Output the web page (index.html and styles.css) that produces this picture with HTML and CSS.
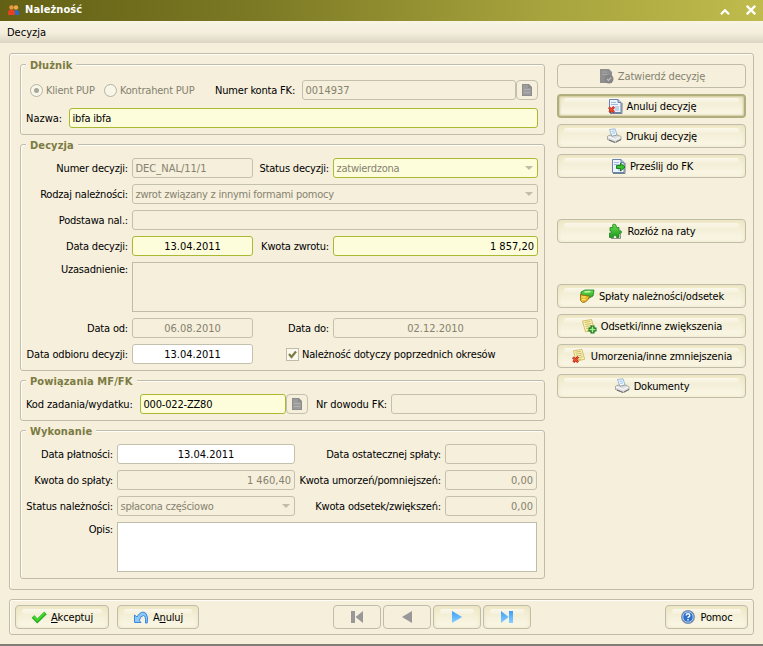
FILE: index.html
```html
<!DOCTYPE html>
<html lang="pl">
<head>
<meta charset="utf-8">
<title>Należność</title>
<link rel="stylesheet" href="styles.css">
</head>
<body>
<svg width="0" height="0" class="defs" aria-hidden="true">
  <defs>
    <linearGradient id="blue" x1="0" y1="0" x2="0" y2="1"><stop offset="0" stop-color="#3f9df8"/><stop offset="1" stop-color="#85d0ff"/></linearGradient>
    <linearGradient id="green" x1="0" y1="0" x2="0" y2="1"><stop offset="0" stop-color="#6be04e"/><stop offset="1" stop-color="#1c9a1c"/></linearGradient>
    <symbol id="page" viewBox="0 0 16 16"><path d="M2.500 1.500H11l3 3v10H2.500z" fill="#eef4fc" stroke="#6a83ad"/><path d="M11 1.500v3h3" fill="#b7c9e5" stroke="#6a83ad"/><path d="M4 4.500h5M4 6.500h7" stroke="#a4b9dc"/><path d="M8 8h4v5H8z" fill="#c3d3ec"/><path d="M3 15.500h12V5" fill="none" stroke="#55607a" stroke-width=".8"/></symbol>
    <symbol id="printer" viewBox="0 0 16 16"><path d="M3.500 1.500l5.500-.7 2 6-5 1.700z" fill="#f4faff" stroke="#7b9cc0" stroke-width=".7"/><path d="M5.500 3.300l3-.3M6.200 5.300l3-.4" stroke="#8fc0ee"/><path d="M1.500 8.300L5 6.800l1 1.500L11 7l4 1.500v3l-5.500 3-8-3z" fill="#dddedf" stroke="#8a8a8a" stroke-width=".7"/><path d="M2 8.800l7.500 2.700 5-2.700" fill="none" stroke="#fff"/><path d="M3 11.500l6 2.500v1l-6-2.300z" fill="#707070"/><path d="M10 14l5-2.500" stroke="#777" stroke-width="1.200"/></symbol>
    <symbol id="cross" viewBox="0 0 8 8"><path d="M1 1.500l6 5.500M7 1L1.500 7" stroke="#b81e0c" stroke-width="2.800"/><path d="M1.300 1.700l5.400 5M6.600 1.500l-5 5" stroke="#f25436" stroke-width="1.400"/></symbol>
    <symbol id="note" viewBox="0 0 16 16"><path d="M1.500 3l9-1.500L13.500 12l-9 2z" fill="#fcf5ae" stroke="#c9ae57" stroke-width=".8"/><path d="M3.500 4.500l6-1M4 6.500l6.500-1M4.500 8.500l6.500-1M5 10.500l6.500-1M6 12.500l4-.7" stroke="#bca865" stroke-width=".8"/></symbol>
    <symbol id="doc" viewBox="0 0 10 12"><path d="M0 0h7l3 3v9H0z" fill="#8d8d8d"/><path d="M1 1h5v3h3v7H1z" fill="#9c9c9c"/><path d="M2 5.500h6M2 8.500h6" stroke="#b0b0b0"/></symbol>
  </defs>
</svg>
<header class="titlebar">
  <svg class="people" viewBox="0 0 11 10"><circle cx="8" cy="2.500" r="2.200" fill="#e9a84c"/><path d="M6 10V7q0-2 2-2t3 2v3z" fill="#286bd0"/><circle cx="3.500" cy="2.500" r="2.300" fill="#e59a3e"/><path d="M0 10V7q0-2.500 3.500-2.500T7 7v3z" fill="#e4431b"/></svg>
  <h1>Należność</h1>
  <svg class="up" viewBox="0 0 10 6"><path d="M1 5.200l4-4 4 4" fill="none" stroke="#fff" stroke-width="2.200"/></svg>
  <svg class="close" viewBox="0 0 10 10"><path d="M.8.8l8.400 8.400M9.200.8L.8 9.200" stroke="#fff" stroke-width="2.300"/></svg>
</header>
<nav class="menu"><span>Decyzja</span></nav>
<main class="panel main">
  <div class="forms">
    <section class="group debtor">
      <h2>Dłużnik</h2>
      <div class="row">
        <i class="radio on"></i><span class="dim r1">Klient PUP</span>
        <i class="radio"></i><span class="dim r2">Kontrahent PUP</span>
        <span class="acct">Numer konta FK:</span>
        <div class="field off digits acctf">0014937</div>
        <div class="pick"><svg><use href="#doc"/></svg></div>
      </div>
      <div class="row"><span class="name">Nazwa:</span><div class="field req grow">ibfa ibfa</div></div>
    </section>

    <section class="group decision">
      <h2>Decyzja</h2>
      <label>Numer decyzji:</label><div class="field off digits">DEC_NAL/11/1</div>
      <label>Status decyzji:</label><div class="field off req combo">zatwierdzona</div>
      <label>Rodzaj należności:</label><div class="field off combo wide">zwrot związany z innymi formami pomocy</div>
      <label>Podstawa nal.:</label><div class="field off wide"></div>
      <label>Data decyzji:</label><div class="field req date">13.04.2011</div>
      <label>Kwota zwrotu:</label><div class="field req amount">1 857,20</div>
      <label class="top">Uzasadnienie:</label><div class="area off wide"></div>
      <label>Data od:</label><div class="field off date">06.08.2010</div>
      <label>Data do:</label><div class="field off date">02.12.2010</div>
      <label>Data odbioru decyzji:</label><div class="field date">13.04.2011</div>
      <div class="check"><i><svg viewBox="0 0 9 9"><path d="M1 4l2.500 3L8 1.500" fill="none" stroke="#7c7c45" stroke-width="2.200"/></svg></i><span>Należność dotyczy poprzednich okresów</span></div>
    </section>

    <section class="group links">
      <h2>Powiązania MF/FK</h2>
      <div class="row">
        <span class="code">Kod zadania/wydatku:</span><div class="field req codef">000-022-ZZ80</div>
        <div class="pick"><svg><use href="#doc"/></svg></div>
        <span class="proof">Nr dowodu FK:</span><div class="field off grow"></div>
      </div>
    </section>

    <section class="group exec">
      <h2>Wykonanie</h2>
      <label>Data płatności:</label><div class="field date">13.04.2011</div>
      <label>Data ostatecznej spłaty:</label><div class="field off"></div>
      <label>Kwota do spłaty:</label><div class="field off amount">1 460,40</div>
      <label>Kwota umorzeń/pomniejszeń:</label><div class="field off amount">0,00</div>
      <label>Status należności:</label><div class="field off combo">spłacona częściowo</div>
      <label>Kwota odsetek/zwiększeń:</label><div class="field off amount">0,00</div>
      <label class="top">Opis:</label><div class="area wide"></div>
    </section>
  </div>

  <aside class="actions">
    <button class="disabled"><svg viewBox="0 0 16 16"><path d="M2 1h9l3 3v11H2z" fill="#8f8f8f"/><path d="M4 4h5M4 6.500h7" stroke="#a5a5a5"/><circle cx="11" cy="11" r="4.500" fill="#858585"/><path d="M9 11l1.500 1.500L13 9.500" fill="none" stroke="#bbb" stroke-width="1.300"/></svg><span>Zatwierdź decyzję</span></button>
    <button class="default"><svg viewBox="0 0 16 16"><use href="#page"/><use href="#cross" x="1" y="8" width="7" height="7"/></svg><span>Anuluj decyzję</span></button>
    <button><svg viewBox="0 0 16 16"><use href="#printer"/></svg><span>Drukuj decyzję</span></button>
    <button><svg viewBox="0 0 16 16"><use href="#page"/><path d="M6.500 7.500h4V5l4.500 4-4.500 4v-2.500h-4z" fill="#35c52a" stroke="#147418" stroke-width=".9"/></svg><span>Prześlij do FK</span></button>
    <button class="apart"><svg viewBox="0 0 16 16"><path d="M3 4.500h3Q4.500 1 7 1t2.500 3.500H12V8q2.500-1 2.500 1T12 10.500V14.500H9.500Q9.500 12 8 12t-1.500 2.500H2.500V10q2 .5 2-1t-1.500-1z" fill="url(#green)" stroke="#21812a" stroke-width=".8"/><path d="M4 15.500h9.500V11" fill="none" stroke="#777" stroke-width=".8"/></svg><span>Rozłóż na raty</span></button>
    <button class="apart"><svg viewBox="0 0 16 16"><path d="M2 4l4-2 9 0-1 6-6 3-6-2z" fill="url(#green)" stroke="#197b21" stroke-width=".8"/><path d="M5.500 4l6-.5" stroke="#c9f6b2" stroke-width="1.500"/><path d="M1.500 6.500l4 1 5 .5-1 3-3 3-3 .5-2-2z" fill="#e9b729" stroke="#8e6510" stroke-width=".8"/><path d="M2.500 9h4.500M3 11.500h3.500" stroke="#fff086"/></svg><span>Spłaty należności/odsetek</span></button>
    <button><svg viewBox="0 0 16 16"><use href="#note"/><path d="M11.500 7.500v8M7.500 11.500h8" stroke="#11701a" stroke-width="4"/><path d="M11.500 8.500v6M8.500 11.500h6" stroke="#a5f087" stroke-width="1.600"/></svg><span>Odsetki/inne zwiększenia</span></button>
    <button><svg viewBox="0 0 16 16"><use href="#note" x="1" y="0" width="15" height="15"/><use href="#cross" x="1" y="8" width="7" height="7"/></svg><span>Umorzenia/inne zmniejszenia</span></button>
    <button><svg viewBox="0 0 16 16"><use href="#printer"/></svg><span>Dokumenty</span></button>
  </aside>
</main>
<footer class="panel foot">
  <button class="ok"><svg viewBox="0 0 16 16"><path d="M2 7.500l4.300 4.500L14.500 4" fill="none" stroke="#25a51d" stroke-width="3.600"/><path d="M2.500 7.500l3.800 3.800L14 4" fill="none" stroke="#3dd82d" stroke-width="2.200"/></svg><span><u>A</u>kceptuj</span></button>
  <button class="cancel"><svg viewBox="0 0 16 16"><path d="M1.500 6v7.500H8L6.300 11.500Q7.500 6.500 10.500 6.500q2.500 0 2 7.500h1.700Q15.500 8 13 4.500 8.500.5 4 8z" fill="#8cc9fb" stroke="#2c7ed6" stroke-width=".9"/></svg><span>A<u>n</u>uluj</span></button>
  <div class="nav">
    <button class="disabled"><svg viewBox="0 0 16 16"><path d="M2 2h4v12H2zM14 2v12L6.500 8z" fill="#989898"/></svg></button>
    <button class="disabled"><svg viewBox="0 0 16 16"><path d="M13 2v12L3 8z" fill="#989898"/></svg></button>
    <button><svg viewBox="0 0 16 16"><path d="M3 2l10 6-10 6z" fill="url(#blue)"/></svg></button>
    <button><svg viewBox="0 0 16 16"><path d="M2 2l7.500 6L2 14zM10 2h4v12h-4z" fill="url(#blue)"/></svg></button>
  </div>
  <button class="help"><svg viewBox="0 0 16 16"><circle cx="8" cy="8" r="6.300" fill="#2d6fc8" stroke="#7f8ea5" stroke-width="1.200"/><circle cx="8" cy="8" r="5.200" fill="none" stroke="#a9d3fb"/><path d="M6.100 6.500Q6.200 4.700 8 4.700t1.800 1.700q0 .9-1 1.400-.8.500-.8 1.300" fill="none" stroke="#fff" stroke-width="1.400"/><path d="M7.300 10.100h1.400v1.400H7.300z" fill="#fff"/></svg><span>Pomoc</span></button>
</footer>
<div class="edge"></div>
</body>
</html>
```

FILE: styles.css
```css
* { box-sizing: border-box; }
body {
  margin: 0;
  width: 763px;
  height: 646px;
  display: flex;
  flex-direction: column;
  overflow: hidden;
  background: #f5efdc;
  color: #000;
  font: 11px/14px "DejaVu Sans Condensed", "DejaVu Sans", sans-serif;
  font-stretch: condensed;
  letter-spacing: -0.19px;
  white-space: nowrap;
}
.defs { position: absolute; }
h1, h2 { margin: 0; font-size: 11px; line-height: 14px; letter-spacing: 0.1px; }

.titlebar {
  height: 21px;
  display: flex;
  align-items: center;
  padding: 0 7px 2px 8px;
  background: linear-gradient(90deg, #636015, #7b7924 33%, #a8a43e 72%, #bfbb4c);
}
.titlebar h1 { color: #fff; flex: 1; padding-top: 1px; }
.people { width: 11px; height: 10px; margin-right: 6px; }
.up { width: 10px; height: 6px; margin: 4px 16px 0 0; }
.close { width: 10px; height: 10px; margin-top: 1px; }
.menu {
  height: 22px;
  padding: 5px 7px 3px;
  letter-spacing: 0;
  background: linear-gradient(#f8f5e5, #f3eddb 55%, #dcd5c3);
}

.panel {
  margin-left: 9px;
  width: 745px;
  border: 1px solid #bfbdaa;
  border-radius: 3px;
  box-shadow: inset 1px 1px #fffdf5;
  display: flex;
}
.main { margin-top: 10px; height: 537px; padding: 10px 7px 10px 10px; justify-content: space-between; }
.forms { width: 525px; display: flex; flex-direction: column; gap: 9px; }
.group {
  position: relative;
  border: 1px solid #bfbdaa;
  border-radius: 3px;
  box-shadow: inset 1px 1px #fffdf5;
  padding: 13px 0 6px;
}
.group h2 {
  position: absolute;
  left: 5px;
  top: -6px;
  padding: 0 4px;
  background: #f5efdc;
  color: #7c7b42;
}
.debtor { height: 71px; padding-top: 15px; display: flex; flex-direction: column; gap: 8px; }
.decision, .exec { display: grid; gap: 6px 4px; align-items: center; }
.decision { height: 227px; grid-template-columns: 107px 121px 72px 205px; }
.links { height: 41px; }
.exec { height: 149px; grid-template-columns: 92px 178px 142px 92px; }
.exec, .links { padding-right: 7px; }
.row { display: flex; align-items: center; height: 20px; }
.row > span, .check span { padding-top: 1px; }
label { display: flex; justify-content: flex-end; padding-top: 1px; }
label.top { align-self: start; }

.field {
  height: 20px;
  border: 1px solid #c3c1ae;
  border-radius: 3px;
  background: #fff;
  padding: 3px 3px 1px;
}
.field:not(.amount):not(.date) { padding-left: 2.500px; }
.area { height: 50px; border: 1px solid #bfbdaa; background: #fff; }
.off { background: #f5efdc; color: #86826f; }
.req { background: #fdfddb; border-color: #a9b934; }
.date { text-align: center; }
.amount { text-align: right; }
.date, .amount, .digits { letter-spacing: 0; }
.wide { grid-column: 2 / -1; }
.field.combo { display: flex; justify-content: space-between; align-items: center; padding-right: 4px; letter-spacing: -0.25px; }
.combo::after { content: ""; margin-bottom: 2px; border: 4.500px solid transparent; border-top: 4px solid #bfbdaa; border-bottom: 0; }
.grow { flex: 1; }
.dim { color: #86826f; }
.radio {
  width: 13px;
  height: 13px;
  border: 1px solid #b5b3a1;
  border-radius: 50%;
  background: #f8f5e9;
}
.radio.on { margin-left: 9px; background: radial-gradient(circle, #a9a796 0 2px, #f8f5e9 3px); }
.r1 { width: 58px; margin-left: 3px; }
.r2 { width: 95px; margin-left: 3px; }
.acct { width: 87px; }
.acctf { width: 214px; }
.pick {
  width: 22px;
  height: 20px;
  border: 1px solid #c3c1ae;
  border-radius: 4px;
  display: flex;
  align-items: center;
  justify-content: center;
}
.pick svg { width: 10px; height: 12px; }
.debtor .row { padding-right: 6px; }
.name { width: 48px; padding-left: 5px; letter-spacing: 0; }
.check { grid-column: 3 / -1; display: flex; align-items: center; padding-left: 29px; }
.check i { width: 13px; height: 13px; margin-right: 3px; border: 1px solid #bfbdaa; background: #fbf9ef; display: flex; align-items: center; justify-content: center; }
.check svg { width: 9px; height: 9px; }
.code { width: 119px; padding-left: 5px; letter-spacing: -0.1px; }
.codef { width: 146px; }
.proof { width: 83px; padding-left: 8px; letter-spacing: -0.1px; }

.actions { width: 189px; display: flex; flex-direction: column; gap: 6px; }
button {
  position: relative;
  height: 24px;
  margin: 0;
  padding: 0;
  border: 1px solid #bfbdaa;
  border-radius: 4px;
  background: linear-gradient(#efe8c8, #f4efd8 45%, #fbf8e8);
  box-shadow: inset 0 0 4px #eae2bb;
  color: #000;
  font: inherit;
  letter-spacing: -0.15px;
  display: flex;
  align-items: center;
  justify-content: center;
  gap: 4px;
}
button::before {
  content: "";
  position: absolute;
  left: 6px;
  right: 6px;
  top: 3px;
  height: 5px;
  border-radius: 3px;
  background: linear-gradient(#fbf8eb, #f5f0da);
}
button svg { width: 16px; height: 16px; position: relative; }
button span { position: relative; padding-top: 1px; }
button.disabled { background: none; box-shadow: none; color: #86826f; }
button.disabled::before { display: none; }
button.default { border: 2px solid #b1ad7d; box-shadow: inset 0 0 2px 1px #cfc99c; }
button.default::before { left: 5px; right: 5px; top: 2px; }
.apart { margin-top: 35px; }

.foot { margin-top: 9px; height: 36px; padding: 5px; }
.ok { width: 94px; }
.cancel { width: 82px; margin-left: 8px; }
.nav { display: flex; gap: 2px; margin-left: 134px; }
.nav button { width: 48px; }
.help { width: 83px; margin-left: auto; }
u { text-underline-offset: 1px; }
.edge { margin-top: 9px; height: 2px; background: #807e74; }
```
